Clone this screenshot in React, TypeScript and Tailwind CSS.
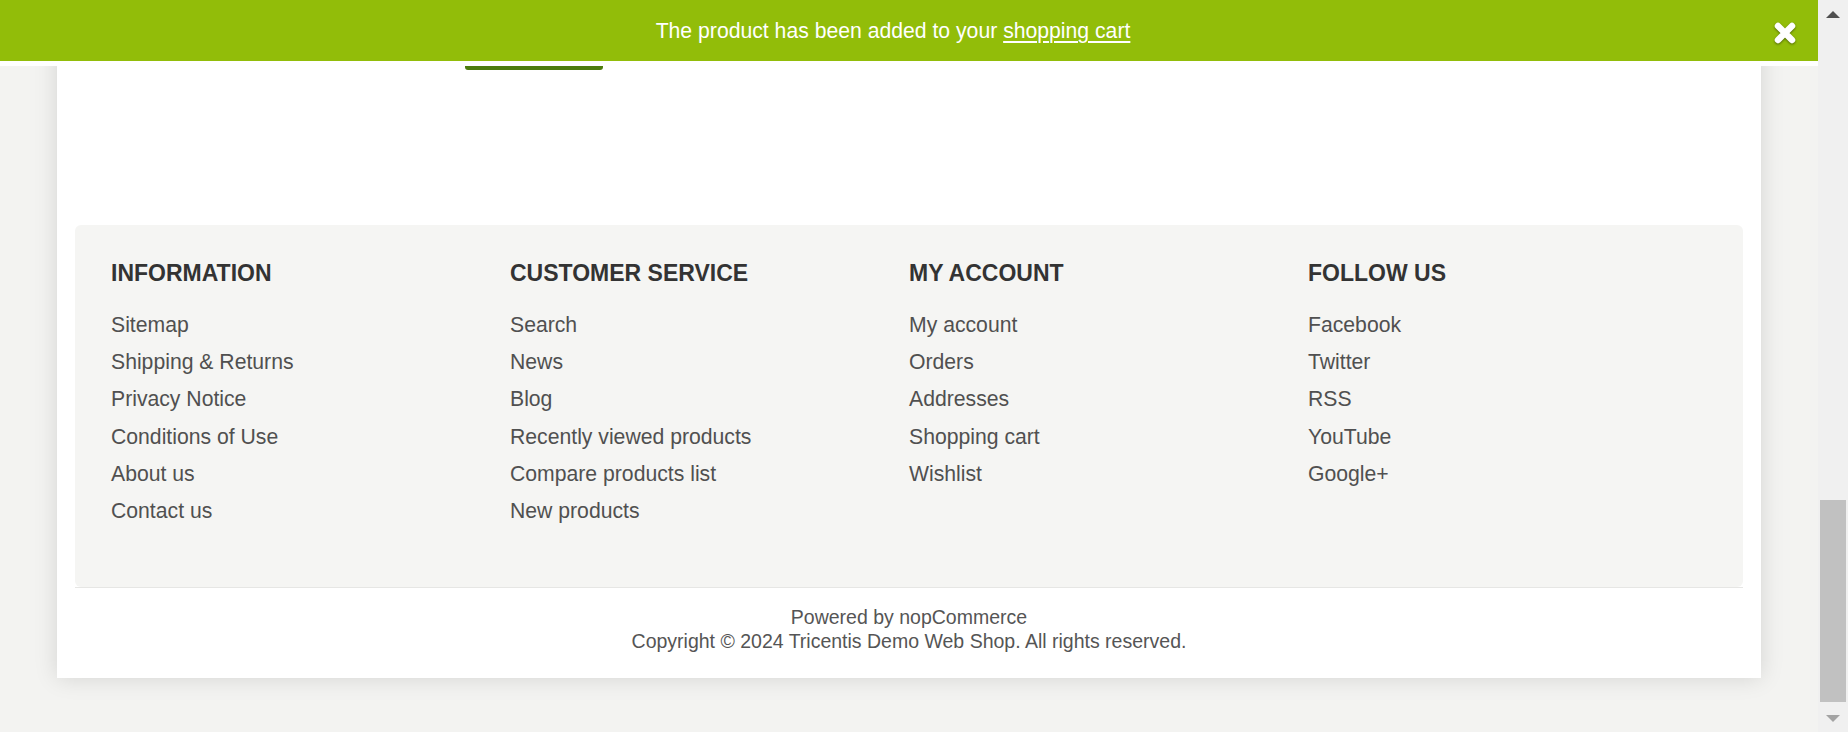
import React from 'react';

const columns = [
    {
        title: 'INFORMATION',
        links: ['Sitemap', 'Shipping & Returns', 'Privacy Notice', 'Conditions of Use', 'About us', 'Contact us'],
    },
    {
        title: 'CUSTOMER SERVICE',
        links: ['Search', 'News', 'Blog', 'Recently viewed products', 'Compare products list', 'New products'],
    },
    {
        title: 'MY ACCOUNT',
        links: ['My account', 'Orders', 'Addresses', 'Shopping cart', 'Wishlist'],
    },
    {
        title: 'FOLLOW US',
        links: ['Facebook', 'Twitter', 'RSS', 'YouTube', 'Google+'],
    },
];

// --- notification bar (fixed over the page) ---
const BarNotification = () => (
    <div className="absolute top-0 left-0 right-0 z-10 h-[66px] border-b-[5px] border-white bg-[#92bd09] flex items-center justify-center pr-[32px]">
        <p className="text-[21.2px] text-white leading-none">
            The product has been added to your{' '}
            <a href="#" className="underline underline-offset-[3px] decoration-[1.5px]">
                shopping cart
            </a>
        </p>
        <button className="absolute right-[22px] top-[22px] w-[22px] h-[22px] drop-shadow-[0_1px_1px_rgba(0,0,0,0.45)]">
            <svg viewBox="0 0 22 22" className="w-[22px] h-[22px]">
                <path d="M4 4 L18 18 M18 4 L4 18" stroke="#fff" strokeWidth="6.5" strokeLinecap="round" fill="none" />
            </svg>
        </button>
    </div>
);

const Scrollbar = () => (
    <div className="w-[30px] h-full bg-[#f0f0f0] flex flex-col items-center">
        <div className="h-[30px] w-full flex items-center justify-center">
            <div className="w-0 h-0 border-l-[7px] border-r-[7px] border-b-[7px] border-l-transparent border-r-transparent border-b-[#505050] -mt-[2px]" />
        </div>
        <div className="flex-1 w-full" />
        <div className="w-[26px] h-[202px] bg-[#c1c1c1]" />
        <div className="h-[30px] w-full flex items-center justify-center">
            <div className="w-0 h-0 border-l-[7px] border-r-[7px] border-t-[7px] border-l-transparent border-r-transparent border-t-[#a3a3a3] mt-[2px]" />
        </div>
    </div>
);

export default function App() {
    return (
        <div className="w-[1848px] h-[732px] flex overflow-hidden bg-[#f3f3f1] font-['Liberation_Sans',Arial,sans-serif]">
            <div className="relative flex-1 h-full">
                <BarNotification />

                <div className="mx-[57px] bg-white shadow-[0_0_22px_rgba(0,0,0,0.13)] px-[18px] pb-[25px]">
                    {/* tail of the add-to-cart button, mostly hidden under the bar */}
                    <div className="h-[225px] pl-[390px] pt-[30px]">
                        <div className="w-[138px] h-[40px] bg-[#4c7c0e] rounded-b-[3px]" />
                    </div>

                    {/* footer links */}
                    <div className="bg-[#f5f5f3] rounded-[6px] h-[362px] px-[36px] pt-[34px] grid grid-cols-4">
                        {columns.map((col) => (
                            <div key={col.title}>
                                <h3 className="text-[23px] leading-[28px] font-bold text-[#333]">{col.title}</h3>
                                <ul className="mt-[19px]">
                                    {col.links.map((l) => (
                                        <li key={l} className="text-[21.2px] leading-[37.2px] text-[#505050]">
                                            <a href="#">{l}</a>
                                        </li>
                                    ))}
                                </ul>
                            </div>
                        ))}
                    </div>

                    <div className="border-t border-[#e6e6e4] pt-[17px] text-center text-[19.5px] leading-[24px] text-[#555]">
                        <div>
                            Powered by <a href="#">nopCommerce</a>
                        </div>
                        <div>Copyright © 2024 Tricentis Demo Web Shop. All rights reserved.</div>
                    </div>
                </div>
            </div>
            <Scrollbar />
        </div>
    );
}
